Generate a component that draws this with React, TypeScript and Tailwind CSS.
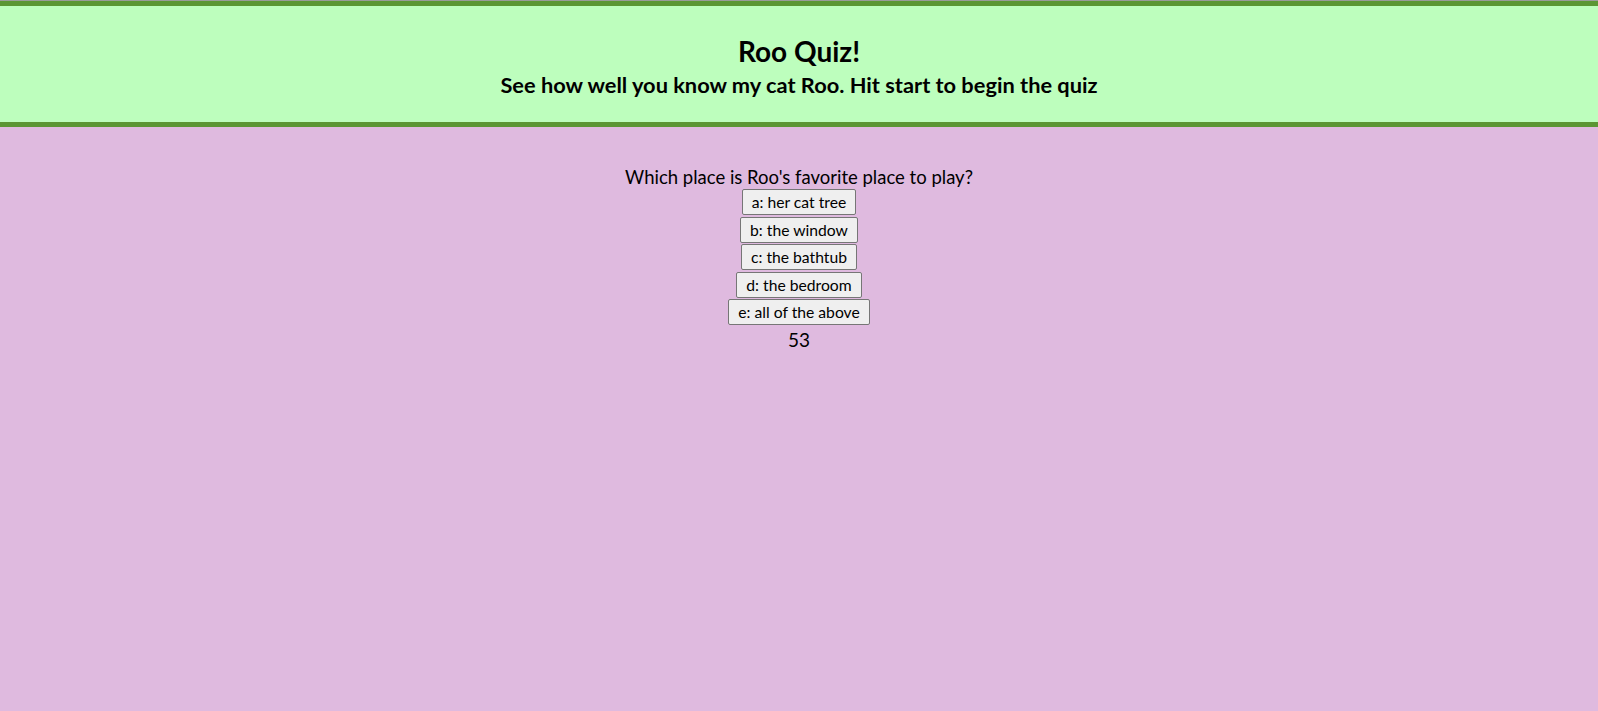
export default function App() {
  const answers = ["a: her cat tree", "b: the window", "c: the bathtub", "d: the bedroom", "e: all of the above"];
  return (
    <div className="min-h-screen bg-[#dfbadf] text-black" style={{ fontFamily: "Lato, 'Liberation Sans', sans-serif" }}>
      <div className="h-px bg-[#9a9a9a]" />
      <header className="border-y-[5px] border-[#5b9634] bg-[#bdfebd] pt-[28px] pb-[24px] text-center">
        <h1 className="text-[28px] font-bold leading-[34px]">Roo Quiz!</h1>
        <h2 className="mt-[4px] text-[21.8px] font-bold leading-[26px]">See how well you know my cat Roo. Hit start to begin the quiz</h2>
      </header>
      <main className="flex flex-col items-center pt-[39px] text-center">
        <p className="text-[18.5px] leading-[23px]">Which place is Roo's favorite place to play?</p>
        <div className="flex flex-col items-center gap-[1.5px]">
          {answers.map((a) => (
            <button
              key={a}
              className="h-[26px] rounded-[2px] border border-[#767676] bg-[#efefef] px-[9px] text-[15.7px] leading-[20px]"
            >
              {a}
            </button>
          ))}
        </div>
        <p className="mt-[3px] text-[19px] leading-[24px]">53</p>
      </main>
    </div>
  );
}
